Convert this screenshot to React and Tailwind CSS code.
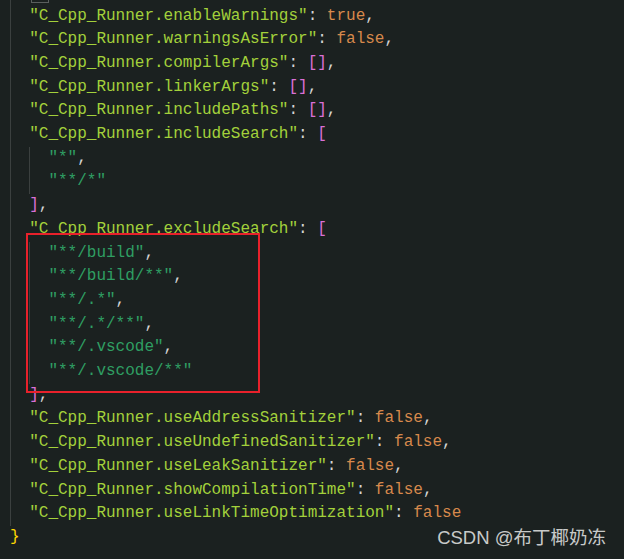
import React from "react";

const K = "text-[#a3d13b]"; // keys
const V = "text-[#d7894c]"; // values
const S = "text-[#2f9e63]"; // array strings
const P = "text-[#d4d4d4]"; // punctuation
const B2 = "text-[#da70d6]"; // brackets level 2
const B1 = "text-[#ffd700]"; // brackets level 1

function Guide() {
  return <span className="inline-block w-[19.2px] h-full shrink-0 border-l border-[#3b403f]" />;
}

function Line({ depth, children }) {
  return (
    <div className="flex h-[23.71px] items-center whitespace-pre">
      {Array.from({ length: depth }).map((_, i) => (
        <Guide key={i} />
      ))}
      <span className="leading-[23.71px]">{children}</span>
    </div>
  );
}

function Prop({ name, value, vcls = V, comma = true }) {
  return (
    <Line depth={1}>
      <span className={K}>"C_Cpp_Runner.{name}"</span>
      <span className={P}>: </span>
      <span className={vcls}>{value}</span>
      {comma && <span className={P}>,</span>}
    </Line>
  );
}

function EmptyArr({ name }) {
  return (
    <Line depth={1}>
      <span className={K}>"C_Cpp_Runner.{name}"</span>
      <span className={P}>: </span>
      <span className={B2}>[]</span>
      <span className={P}>,</span>
    </Line>
  );
}

function Item({ text, comma = true }) {
  return (
    <Line depth={2}>
      <span className={S}>"{text}"</span>
      {comma && <span className={P}>,</span>}
    </Line>
  );
}

export default function App() {
  return (
    <div
      className="relative w-full h-[559px] overflow-hidden bg-[#1b2120] text-[16px]"
      style={{ fontFamily: '"Liberation Mono", "DejaVu Sans Mono", monospace' }}
    >
      <div className="pl-[10px]">
        <div className="h-[4.5px] relative border-l border-[#3b403f] ml-0">
          <span className="absolute left-[20px] top-0 w-[18px] h-[3px] border border-t-0 border-[#5a5f5e]" />
        </div>
        <Prop name="enableWarnings" value="true" />
        <Prop name="warningsAsError" value="false" />
        <EmptyArr name="compilerArgs" />
        <EmptyArr name="linkerArgs" />
        <EmptyArr name="includePaths" />
        <Line depth={1}>
          <span className={K}>"C_Cpp_Runner.includeSearch"</span>
          <span className={P}>: </span>
          <span className={B2}>[</span>
        </Line>
        <Item text="*" />
        <Item text="**/*" comma={false} />
        <Line depth={1}>
          <span className={B2}>]</span>
          <span className={P}>,</span>
        </Line>
        <Line depth={1}>
          <span className={K}>"C_Cpp_Runner.excludeSearch"</span>
          <span className={P}>: </span>
          <span className={B2}>[</span>
        </Line>
        <Item text="**/build" />
        <Item text="**/build/**" />
        <Item text="**/.*" />
        <Item text="**/.*/**" />
        <Item text="**/.vscode" />
        <Item text="**/.vscode/**" comma={false} />
        <Line depth={1}>
          <span className={B2}>]</span>
          <span className={P}>,</span>
        </Line>
        <Prop name="useAddressSanitizer" value="false" />
        <Prop name="useUndefinedSanitizer" value="false" />
        <Prop name="useLeakSanitizer" value="false" />
        <Prop name="showCompilationTime" value="false" />
        <Prop name="useLinkTimeOptimization" value="false" comma={false} />
        <Line depth={0}>
          <span className={B1}>{"}"}</span>
        </Line>
      </div>

      <div className="absolute left-[26px] top-[233px] w-[234px] h-[160px] border-2 border-[#e8212b]" />

      <div
        className="absolute right-[18px] top-[526px] text-[18.5px] leading-[24px] text-[#c8cac9]"
        style={{ fontFamily: '"Liberation Sans", "Noto Sans CJK SC", sans-serif' }}
      >
        CSDN @布丁椰奶冻
      </div>
    </div>
  );
}
